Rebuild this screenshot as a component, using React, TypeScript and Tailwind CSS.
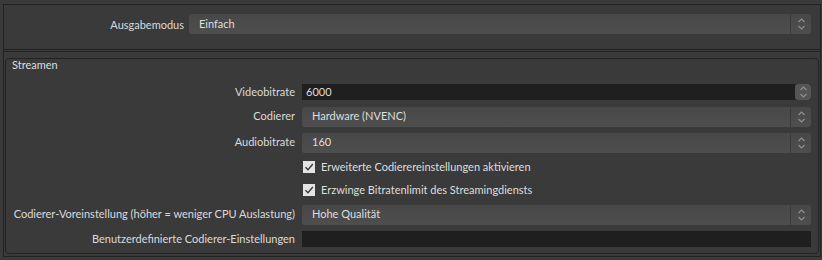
import React from "react";

const font = { fontFamily: "'Segoe UI', Lato, 'Liberation Sans', sans-serif" };

function Chevrons() {
  return (
    <svg width="9" height="14" viewBox="0 0 9 14" fill="none" stroke="#8f8f8f" strokeWidth="1.2">
      <path d="M1.5 5 L4.5 2 L7.5 5" />
      <path d="M1.5 9 L4.5 12 L7.5 9" />
    </svg>
  );
}

function Combo({ value }: { value: string }) {
  return (
    <div className="flex h-[20px] flex-1 items-center rounded-[3px] bg-gradient-to-b from-[#484848] to-[#4e4e4e]">
      <span className="flex-1 pl-[10px] text-[11px] text-[#dedede]">{value}</span>
      <div className="flex h-full w-[21px] items-center justify-center border-l border-[#3a3a3a]">
        <Chevrons />
      </div>
    </div>
  );
}

function SpinBox({ value }: { value: string }) {
  return (
    <div className="flex h-[16px] flex-1 items-center bg-[#1f1f1f]">
      <span className="flex-1 pl-[4px] text-[11px] text-[#dedede]">{value}</span>
      <div className="flex h-full w-[16px] items-center justify-center rounded-[3px] bg-[#555555]">
        <Chevrons />
      </div>
    </div>
  );
}

function CheckRow({ label }: { label: string }) {
  return (
    <div className="flex h-[17px] items-center">
      <div className="w-[290px]" />
      <div className="flex items-center gap-[6px]">
        <div className="flex h-[12px] w-[12px] items-center justify-center bg-[#e4e4e4]">
          <svg width="10" height="10" viewBox="0 0 10 10" fill="none" stroke="#3a3a3a" strokeWidth="1.4">
            <path d="M1.5 5.2 L4 7.8 L8.8 2" />
          </svg>
        </div>
        <span className="text-[11px] text-[#dedede]">{label}</span>
      </div>
    </div>
  );
}

function Row({ label, children }: { label: string; children: React.ReactNode }) {
  return (
    <div className="flex items-center gap-[7px]">
      <span className="w-[282px] whitespace-nowrap text-right text-[11px] text-[#dadada]">{label}</span>
      {children}
    </div>
  );
}

export default function App() {
  return (
    <div className="h-[260px] w-[822px] bg-[#3a3a3a] pl-[3px] pt-[4px] pr-[1px]" style={font}>
      <div className="h-[253px] border border-[#232323]">
        {/* output mode */}
        <div className="flex h-[45px] items-start border-b border-[#232323] pt-[9px] pr-[9px]">
          <span className="w-[180px] pt-[3px] text-right text-[11px] text-[#dadada]">Ausgabemodus</span>
          <div className="ml-[5px] flex flex-1">
            <Combo value="Einfach" />
          </div>
        </div>

        <div className="mt-[1px] border-t border-[#232323] px-[1px] pt-[6px]">
          <div className="relative h-[196px] rounded-[4px] border border-[#232323] pl-[7px] pr-[7px] pt-[25px]">
            <span className="absolute left-[6px] top-[-2px] text-[11px] text-[#dedede]">Streamen</span>
            <div className="flex flex-col gap-[6px]">
              <Row label="Videobitrate">
                <SpinBox value="6000" />
              </Row>
              <Row label="Codierer">
                <Combo value="Hardware (NVENC)" />
              </Row>
              <Row label="Audiobitrate">
                <Combo value="160" />
              </Row>
              <CheckRow label="Erweiterte Codierereinstellungen aktivieren" />
              <CheckRow label="Erzwinge Bitratenlimit des Streamingdiensts" />
              <Row label="Codierer-Voreinstellung (höher = weniger CPU Auslastung)">
                <Combo value="Hohe Qualität" />
              </Row>
              <Row label="Benutzerdefinierte Codierer-Einstellungen">
                <div className="h-[16px] flex-1 bg-[#1f1f1f]" />
              </Row>
            </div>
          </div>
        </div>
      </div>
    </div>
  );
}
